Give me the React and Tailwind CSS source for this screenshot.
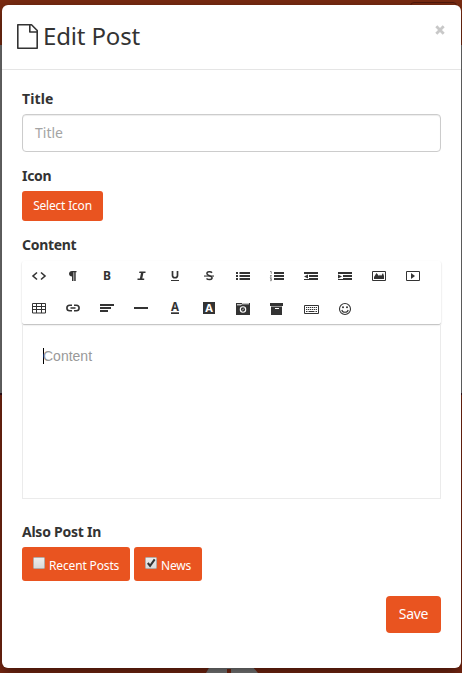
import React from "react";

function Glyph({ children }) {
  return (
    <button className="flex h-[18px] w-[34px] justify-center">
      <svg width="18" height="18" viewBox="0 0 18 18" fill="#333" stroke="none" className="overflow-visible">
        {children}
      </svg>
    </button>
  );
}

function Letter({ ch, x = 9, y = 13, size = 12, fill = "#333", className = "" }) {
  return (
    <text x={x} y={y} fontSize={size} textAnchor="middle" fill={fill} className={"font-['Noto_Sans',sans-serif] font-bold " + className}>
      {ch}
    </text>
  );
}

const rowOne = [
  <path key="code" d="M7 5.500 3 9l4 3.500M11 5.500 15 9l-4 3.500" fill="none" stroke="#333" strokeWidth="1.600" />,
  <path key="para" d="M12.500 4v1.200h-.8V14h-1.500V5.200H9.500V14H8V9.500C6.200 9.500 5 8.400 5 6.800S6.200 4 8 4z" />,
  <Letter key="b" ch="B" x={9} />,
  <path key="i" d="M7.500 4.500h6v1.600h-2.100l-1.100 5.300h1.900V13H5.500v-1.600h2.400L9 6.100H7.100z" />,
  <g key="u"><path d="M6.500 4v4.500c0 3 5 3 5 0V4" fill="none" stroke="#333" strokeWidth="1.700" /><path d="M5 13h8v1H5z" /></g>,
  <g key="s"><path d="M12 5.700C11 4.300 6.900 4.300 6.900 6.500c0 2.700 5.200 1.700 5.200 4.300 0 2.200-4 2.300-5.600.700" fill="none" stroke="#333" strokeWidth="1.500" /><path d="M4 8.500h10v1.100H4z" /></g>,
  <path key="ul" d="M2 5h2v2H2zM2 8h2v2H2zM2 11h2v2H2zM5.500 5H16v2H5.500zM5.500 8H16v2H5.500zM5.500 11H16v2H5.500z" />,
  <g key="ol"><path d="M6 5h10v2H6zM6 8h10v2H6zM6 11h10v2H6z" /><path d="M2 4.500h1.300v2.300M2 8.500h1.500L2.200 10.300h1.500M2 11.500h1.400v2.200H2M2.400 12.600h1" fill="none" stroke="#777" strokeWidth=".8" /></g>,
  <path key="out" d="M2 5h14v2H2zM7 8h9v2H7zM7 11h9v2H7zM2 12h5v1H2zM6 7.500v4L2 9.500z" />,
  <path key="in" d="M2 5h14v2H2zM7 8h9v2H7zM7 11h9v2H7zM2 12h5v1H2zM2 7.500v4l4-2z" />,
  <g key="img"><path d="M2.500 4.500h13v9h-13z" fill="none" stroke="#333" /><path d="M4 12V10l2.500-4L9 9l1-1.500 1 1.500 2-3 1 3v3z" /></g>,
  <g key="vid"><path d="M2.500 4.500h13v9h-13z" fill="none" stroke="#333" /><path d="M7 6v6l4-3z" /></g>,
];

const rowTwo = [
  <path key="table" d="M2.500 3.500h13v9.500h-13zM2.500 6.500h13M2.500 9.500h13M6.500 3.500V13M11.500 3.500V13" fill="none" stroke="#333" strokeWidth="1" />,
  <path key="link" d="M8 5.200H5.700a2.800 2.800 0 0 0 0 5.600H8M10 5.200h2.300a2.800 2.800 0 0 1 0 5.600H10M6.500 8h5" fill="none" stroke="#333" strokeWidth="1.600" />,
  <path key="align" d="M2 4h14v2H2zM2 7h11v2H2zM2 10h8v2H2z" />,
  <path key="hr" d="M2 7h14v2H2z" />,
  <g key="color"><Letter ch="A" y={11} size={11.500} /><path d="M5 12.300h8v1.700H5z" /></g>,
  <g key="bg"><path d="M3 2h12v12H3z" /><Letter ch="A" y={12} size={11} fill="#fff" /></g>,
  <g key="cam"><path d="M2 3h14v12H2z" /><path d="M3 4.800h4l1-1h7" fill="none" stroke="#fff" strokeWidth="1" /><circle cx="9" cy="9.500" r="2.700" fill="none" stroke="#fff" strokeWidth="1.100" /><path d="m8 10.500 2-2" stroke="#fff" strokeWidth=".8" /></g>,
  <g key="box"><path d="M2 3h13v3H2zM3 6.500h11V15H3z" /><path d="M7 8.500h4" stroke="#fff" strokeWidth="1" /></g>,
  <g key="kbd"><path d="M2.500 5.500h14v8h-14z" fill="none" stroke="#333" /><path d="M4 7.500h11M4 9.500h11" stroke="#333" strokeWidth="1" strokeDasharray="1.300 .7" /><path d="M4 11.500h1.500M6.500 11.500h6M13.500 11.500H15" stroke="#333" /></g>,
  <g key="smile"><circle cx="9" cy="9" r="5.500" fill="none" stroke="#333" strokeWidth="1.100" /><circle cx="7" cy="7.300" r="1" /><circle cx="11" cy="7.300" r="1" /><path d="M5.800 10c.8 3 5.600 3 6.400 0" fill="none" stroke="#333" strokeWidth="1.100" /></g>,
];

function Label({ children, className }) {
  return <label className={"block h-5 text-[14px] leading-5 font-bold whitespace-nowrap " + className}>{children}</label>;
}

function CheckButton({ label, checked, className, textClass }) {
  return (
    <button className={"flex h-[34px] rounded-[3px] bg-[#e95420] pt-[10px] pl-[11px] text-white " + className}>
      <svg width="12" height="12" viewBox="0 0 13 13" className="shrink-0">
        <defs>
          <linearGradient id={"box-" + label.length} x1="0" y1="0" x2="0" y2="1">
            <stop offset="0" stopColor="#eee" /><stop offset="1" stopColor="#d8d8d8" />
          </linearGradient>
        </defs>
        <rect x=".5" y=".5" width="12" height="12" rx="1" fill={"url(#box-" + label.length + ")"} stroke="#aaa" />
        {checked && <path d="m3 6.500 2.500 3L10.500 2.500" fill="none" stroke="#333" strokeWidth="2.200" />}
      </svg>
      <span className={"ml-1 text-[12px] leading-[18px] whitespace-nowrap " + textClass}>{label}</span>
    </button>
  );
}

export default function App() {
  return (
    <div className="grid h-[673px] w-[462px] overflow-hidden bg-[#541a0c] font-['Noto_Sans',sans-serif] text-[#333]">
      <div className="col-start-1 row-start-1 flex flex-col">
        <div className="flex h-[45px] items-start justify-end bg-[#7c2c12]">
          <div className="mt-[2px] mr-[5px] h-8 w-[47px] rounded border border-[#541a0c]" />
        </div>
        <div className="h-[348px] bg-[#777]" />
        <div className="h-[2px] bg-[#32101a]" />
        <div className="flex flex-1 items-end bg-[#7c2812]">
          <div className="ml-[206px] flex h-[7px] w-[52px]">
            <svg width="52" height="7" viewBox="0 0 52 7" fill="#808080">
              <path d="M0 7 4 0h17v7zM25 7V3h-4V0h25l6 7z" />
            </svg>
          </div>
        </div>
      </div>
      <div className="col-start-1 row-start-1 mt-[5px] ml-[2px] h-[663px] w-[459px] rounded-[6px] bg-white shadow-[0_5px_15px_rgba(0,0,0,0.5)]">
        <header className="flex h-[65px] justify-between border-b border-[#e5e5e5] pr-[15px] pl-[15px]">
          <div className="flex">
            <svg width="21" height="25" viewBox="0 0 21 25" className="mt-[19px]" fill="none" stroke="#333" strokeWidth="1.600">
              <path d="M.8.8H14.500l5.700 5.700v17.700H.8zM12.800 1v7h7.400" strokeLinejoin="round" />
            </svg>
            <h1 className="ml-[5px] mt-[15px] text-[24px] leading-8 font-normal whitespace-nowrap tracking-[-0.150px]">Edit Post</h1>
          </div>
          <svg width="10" height="10" viewBox="0 0 10 10" className="mt-[20px] mr-px">
            <path d="m1.300 1.300 7.400 7.400m0-7.400-7.400 7.400" stroke="#c8c8c8" strokeWidth="2.800" />
          </svg>
        </header>
        <div className="flex flex-col px-5 pt-[19px]">
          <Label className="tracking-[0.100px]">Title</Label>
          <div className="mt-[5px] flex h-[38px] items-center rounded-[4px] border border-[#ccc] px-3 pb-px text-[14px] text-[#a4a4a4] shadow-[inset_0_1px_1px_rgba(0,0,0,0.075)]">Title</div>
          <Label className="mt-[14px] tracking-[-0.300px]">Icon</Label>
          <button className="mt-[5px] flex h-[30px] w-[81px] items-center justify-center rounded-[3px] bg-[#e95420] text-[12px] whitespace-nowrap text-white tracking-[-0.200px]">Select Icon</button>
          <Label className="mt-[14px] tracking-[-0.300px]">Content</Label>
          <div className="mt-[6px] flex h-[63px] flex-col gap-[15px] rounded-[2px] bg-white pt-[6px] shadow-[0_1px_2px_rgba(0,0,0,0.15),0_1px_1px_rgba(0,0,0,0.14)]">
            <div className="flex">{rowOne.map((icon, i) => <Glyph key={i}>{icon}</Glyph>)}</div>
            <div className="flex">{rowTwo.map((icon, i) => <Glyph key={i}>{icon}</Glyph>)}</div>
          </div>
          <div className="flex h-[175px] items-start border border-t-0 border-[#ebebeb] pt-6 pl-5">
            <div className="flex h-4 items-center border-l border-black font-['Liberation_Sans',Arial,sans-serif] text-[14px] text-[#999]">
              <span className="-ml-px">Content</span>
            </div>
          </div>
          <Label className="mt-[23px] tracking-[-0.250px]">Also Post In</Label>
          <div className="mt-[5px] flex gap-1">
            <CheckButton label="Recent Posts" className="w-[108px]" textClass="tracking-[-0.150px]" />
            <CheckButton label="News" checked className="w-[68px]" textClass="tracking-[-0.200px]" />
          </div>
          <button className="mt-[15px] flex h-[37px] w-[55px] items-center justify-center self-end rounded-[4px] bg-[#e95420] pb-[2px] text-[14px] text-white tracking-[-0.300px]">Save</button>
        </div>
      </div>
    </div>
  );
}
